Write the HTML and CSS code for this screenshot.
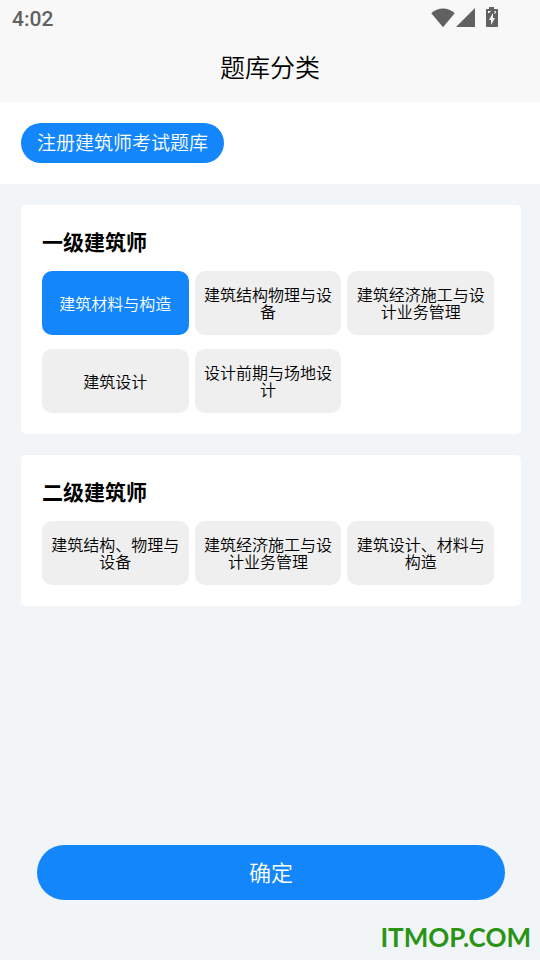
FILE: index.html
```html
<!DOCTYPE html>
<html lang="zh-CN">
<head>
<meta charset="utf-8">
<meta name="viewport" content="width=device-width, initial-scale=1">
<title>题库分类</title>
<link rel="stylesheet" href="styles.css">
</head>
<body>
<header class="top">
  <div class="status">
    <time class="clock">4:02</time>
    <div class="status-icons">
      <svg class="wifi" width="24" height="20" viewBox="0 0 24 20" aria-hidden="true"><path d="M0.300 5.200C3.500 2 7.500 0.400 12 0.400s8.500 1.600 11.700 4.800L12 19.200z"/></svg>
      <svg class="signal" width="20" height="20" viewBox="0 0 20 20" aria-hidden="true"><path d="M19 0v19H0z"/></svg>
      <svg class="battery" width="14" height="22" viewBox="0 0 14 22" aria-hidden="true"><path fill-rule="evenodd" d="M4 0h5v2h3q1 0 1 1v16q0 1-1 1H2q-1 0-1-1V3q0-1 1-1h2zM3 4v2h1l2-2zM9 4l1 1-1 2h1l1-2V4zM8 6l-4 7h2v5l4-7H8z"/></svg>
    </div>
  </div>
  <h1 class="title">题库分类</h1>
</header>
<nav class="tabs">
  <button class="tab" type="button">注册建筑师考试题库</button>
</nav>
<main class="content">
  <section class="card">
    <h2 class="card-title">一级建筑师</h2>
    <div class="options">
      <button class="option selected" type="button">建筑材料与构造</button>
      <button class="option" type="button">建筑结构物理与设备</button>
      <button class="option" type="button">建筑经济施工与设计业务管理</button>
      <button class="option" type="button">建筑设计</button>
      <button class="option" type="button">设计前期与场地设计</button>
    </div>
  </section>
  <section class="card">
    <h2 class="card-title">二级建筑师</h2>
    <div class="options">
      <button class="option" type="button">建筑结构、物理与设备</button>
      <button class="option" type="button">建筑经济施工与设计业务管理</button>
      <button class="option" type="button">建筑设计、材料与构造</button>
    </div>
  </section>
</main>
<footer class="footer">
  <button class="confirm" type="button">确定</button>
  <p class="watermark">ITMOP.COM</p>
</footer>
</body>
</html>
```
FILE: styles.css
```css
* {
  box-sizing: border-box;
}

body {
  margin: 0;
  min-height: 100vh;
  display: flex;
  flex-direction: column;
  background: #f1f5f8;
  color: #000;
  font-family: "Noto Sans CJK SC", sans-serif;
  font-weight: 350;
}

button {
  border: 0;
  font-family: inherit;
  font-weight: inherit;
  cursor: pointer;
}

.top {
  background: #f8f8f8;
}

.status {
  display: flex;
  justify-content: space-between;
  align-items: center;
  height: 36px;
  padding: 0 41px 0 12px;
  color: #616161;
}

.clock {
  padding-top: 2px;
  font: 500 21px/34px Roboto, sans-serif;
}

.status-icons {
  display: flex;
  align-items: center;
  fill: #616161;
}

.signal {
  margin: 0 9px 0 1px;
}

.title {
  margin: 0;
  height: 66px;
  font-size: 25px;
  font-weight: inherit;
  line-height: 60px;
  text-align: center;
}

.tabs {
  padding: 21px;
  background: #fff;
}

.tab {
  display: block;
  height: 40px;
  padding: 0 16px 2px;
  border-radius: 20px;
  background: #1386fc;
  color: #fff;
  font-size: 19px;
  line-height: 38px;
}

.content {
  display: flex;
  flex-direction: column;
  gap: 21px;
  padding: 21px 19px 21px 21px;
}

.card {
  padding: 21px 27px 21px 21px;
  border-radius: 5px;
  background: #fff;
}

.card-title {
  margin: 0 0 15px;
  font-size: 21px;
  font-weight: 700;
  line-height: 30px;
}

.options {
  display: grid;
  grid-template-columns: repeat(3, 1fr);
  gap: 14px 6px;
}

.option {
  min-height: 64px;
  padding: 0 6px;
  border-radius: 10px;
  background: #efefef;
  color: #000;
  font-size: 16px;
  line-height: 17px;
}

.option.selected {
  background: #1386fc;
  color: #fff;
}

.footer {
  margin-top: auto;
  padding-left: 2px;
}

.confirm {
  display: block;
  width: calc(100% - 70px);
  height: 55px;
  margin: 0 35px;
  padding: 0 0 4px;
  border-radius: 28px;
  background: #1386fc;
  color: #fff;
  font-size: 22px;
}

.watermark {
  margin: 0;
  padding: 20px 9px 6px;
  color: #299414;
  font: 700 26px/34px Lato, sans-serif;
  text-align: right;
}
```
